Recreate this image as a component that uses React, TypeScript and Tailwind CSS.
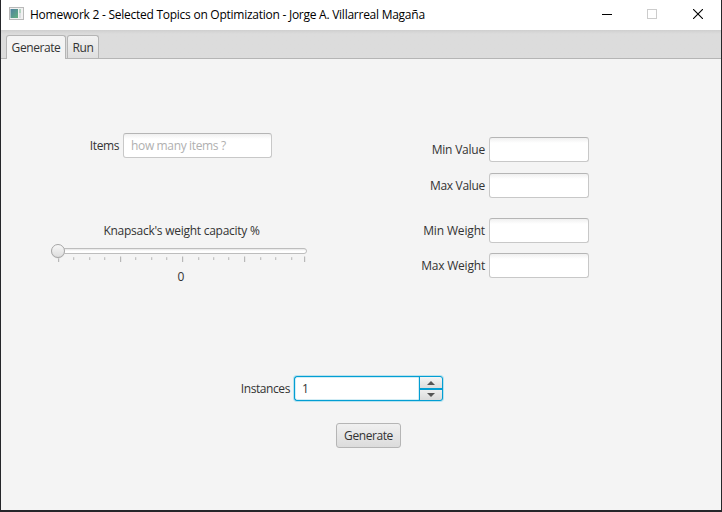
import type { ReactNode } from 'react';

const MAJOR_TICKS = [7, 69, 131, 193, 253];
const MINOR_TICKS = [22, 38, 53, 84, 100, 115, 147, 162, 177, 209, 224, 240];

const FIELD =
  'block h-[25px] rounded-[3px] border border-[#c8c8c8] border-t-[#b5b5b5] bg-white bg-linear-to-b from-[#f0f0f0] to-white to-[5px] px-[7px] text-[12px] tracking-[-0.35px] text-[#333] outline-none placeholder:text-[#b0b0b0]';

function FieldRow({ label, tracking, className }: { label: string; tracking: string; className: string }) {
  return (
    <label className={`flex h-[25px] items-center justify-end gap-[4px] ${className}`}>
      <span className={`whitespace-nowrap ${tracking}`}>{label}</span>
      <input className={`${FIELD} w-[100px]`} />
    </label>
  );
}

function WindowButton({ children }: { children: ReactNode }) {
  return (
    <button className="flex h-[30px] w-[46px] items-center justify-center" type="button">
      {children}
    </button>
  );
}

function TitleBar() {
  return (
    <header className="flex h-[30px] shrink-0 items-center bg-white pl-[8px] text-black">
      <svg width="15" height="13" viewBox="0 0 15 13" className="mb-[3px] mr-[6px] shrink-0">
        <defs>
          <linearGradient id="app" x1="0" y1="0" x2="1" y2="1">
            <stop offset="0" stopColor="#4f7fa0" />
            <stop offset="1" stopColor="#62b17e" />
          </linearGradient>
        </defs>
        <rect x="0.5" y="0.5" width="14" height="12" fill="#f1f1f1" stroke="#b9b9b9" />
        <rect x="1.5" y="2" width="7.5" height="9" fill="url(#app)" />
        <rect x="10" y="2" width="2" height="4" fill="#b3d4c0" />
        <rect x="10" y="6" width="2" height="5" fill="#dcdfe2" />
      </svg>
      <h1 className="flex-1 whitespace-nowrap text-[12px] leading-[30px] tracking-[-0.255px]">
        Homework 2 - Selected Topics on Optimization - Jorge A. Villarreal Magaña
      </h1>
      <WindowButton>
        <span className="mb-px ml-[2px] h-px w-[10px] bg-black" />
      </WindowButton>
      <WindowButton>
        <span className="mb-[2px] size-[10px] border border-[#ccc]" />
      </WindowButton>
      <WindowButton>
        <svg width="10" height="10" viewBox="0 0 10 10" className="mb-[2px]">
          <path d="M0 0 L10 10 M10 0 L0 10" stroke="#000" strokeWidth="1.1" />
        </svg>
      </WindowButton>
    </header>
  );
}

function CapacitySlider() {
  return (
    <div className="ml-[50px] mt-[64px] flex w-[262px] flex-col items-center">
      <span className="h-[18px] whitespace-nowrap pr-px leading-[18px] tracking-[-0.26px]">Knapsack's weight capacity %</span>
      <svg width="262" height="24" viewBox="0 0 262 24" className="mt-[3px]">
        <defs>
          <linearGradient id="thumb" x1="0" y1="0" x2="0" y2="1">
            <stop offset="0" stopColor="#f8f8f8" />
            <stop offset="1" stopColor="#dcdcdc" />
          </linearGradient>
          <linearGradient id="track" x1="0" y1="0" x2="0" y2="1">
            <stop offset="0" stopColor="#dedede" />
            <stop offset="0.5" stopColor="#ffffff" />
          </linearGradient>
        </defs>
        <rect x="0.5" y="5.5" width="255" height="5" rx="2.5" fill="url(#track)" stroke="#bdbdbd" />
        {MAJOR_TICKS.map((x) => (
          <rect key={x} x={x} y="13.5" width="1.2" height="5.5" fill="#b8b8b8" />
        ))}
        {MINOR_TICKS.map((x) => (
          <rect key={x} x={x} y="14.2" width="1.3" height="2.8" fill="#c4c4c4" />
        ))}
        <circle cx="7" cy="8.6" r="7" fill="#dddddd" />
        <circle cx="7" cy="8" r="6.5" fill="url(#thumb)" stroke="#a6a6a6" />
      </svg>
      <span className="mt-px h-[18px] pr-[2px] leading-[18px]">0</span>
    </div>
  );
}

function Arrow({ d }: { d: string }) {
  return (
    <svg width="8" height="4" viewBox="0 0 8 4">
      <path d={d} fill="#555" />
    </svg>
  );
}

function Spinner() {
  return (
    <div className="flex h-[25px] w-[149px] overflow-hidden rounded-[3px] border border-[#039ed3] bg-[#039ed3] shadow-[0_0_0_1px_#b8e2ee]">
      <input
        defaultValue="1"
        className="w-[124px] rounded-l-[2px] border border-[#d3edf5] bg-white px-[6px] text-[12px] text-[#333] outline-none"
      />
      <div className="ml-px flex flex-1 flex-col gap-[2px]">
        <button type="button" className="flex h-[11px] items-center justify-center bg-linear-to-b from-[#f5f5f5] to-[#dddddd]">
          <Arrow d="M0 4 L4 0 L8 4Z" />
        </button>
        <button type="button" className="flex h-[10px] items-center justify-center bg-linear-to-b from-[#eeeeee] to-[#dadada]">
          <Arrow d="M0 0 L8 0 L4 4Z" />
        </button>
      </div>
    </div>
  );
}

export default function App() {
  return (
    <div className="h-[512px] w-[722px] bg-[#25262a] px-px pb-[2px] font-['Open_Sans','Noto_Sans',sans-serif] text-[12px] text-[#333]">
      <div className="flex h-full flex-col bg-[#f4f4f4]">
        <TitleBar />
        <nav className="flex h-[29px] shrink-0 items-end gap-px border-b border-[#b5b5b5] bg-[#dcdcdc] bg-linear-to-b from-[#cfcfcf] to-[#dcdcdc] to-[4px] pl-[5px]">
          <button
            type="button"
            className="-mb-px h-[24px] w-[60px] rounded-t-[3px] border border-b-0 border-[#b5b5b5] bg-[#f4f4f4] tracking-[-0.42px]"
          >
            Generate
          </button>
          <button
            type="button"
            className="h-[23px] w-[32px] rounded-t-[3px] border border-b-0 border-[#b5b5b5] bg-linear-to-b from-[#f2f2f2] to-[#dfdfdf] pt-[2px] tracking-[-0.3px]"
          >
            Run
          </button>
        </nav>
        <main className="flex flex-1 flex-col">
          <div className="flex h-[317px]">
            <section className="w-[388px] pt-[74px]">
              <label className="flex h-[25px] w-[271px] items-center justify-end gap-[4px]">
                <span className="tracking-[-0.4px]">Items</span>
                <input className={`${FIELD} w-[149px]`} placeholder="how many items ?" />
              </label>
              <CapacitySlider />
            </section>
            <section className="w-[200px] pt-[78px]">
              <FieldRow label="Min Value" tracking="tracking-[-0.22px]" className="" />
              <FieldRow label="Max Value" tracking="tracking-[-0.3px]" className="mt-[11px]" />
              <FieldRow label="Min Weight" tracking="tracking-[-0.15px]" className="mt-[20px]" />
              <FieldRow label="Max Weight" tracking="tracking-[-0.2px]" className="mt-[10px]" />
            </section>
          </div>
          <div className="flex w-[442px] items-center justify-end gap-[4px]">
            <span className="pt-px tracking-[-0.42px]">Instances</span>
            <Spinner />
          </div>
          <button
            type="button"
            className="ml-[335px] mt-[22px] h-[25px] w-[65px] rounded-[3px] border border-[#b5b5b5] bg-linear-to-b from-[#f0f0f0] to-[#dcdcdc] pt-px tracking-[-0.42px]"
          >
            Generate
          </button>
        </main>
      </div>
    </div>
  );
}
